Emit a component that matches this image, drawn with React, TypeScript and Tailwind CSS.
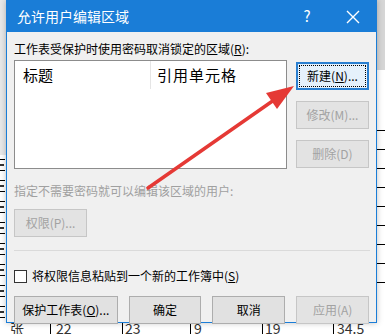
import React from "react";

const font = { fontFamily: '"Noto Sans CJK SC", "Noto Sans", sans-serif' };

function Btn({
  children,
  disabled,
  focused,
  className = "",
}: {
  children: React.ReactNode;
  disabled?: boolean;
  focused?: boolean;
  className?: string;
}) {
  if (focused) {
    return (
      <div className={`border-2 border-[#2a7fd0] bg-[#e5f1fb] p-[1px] ${className}`}>
        <div className="flex h-full items-center justify-center border border-dotted border-black text-[12px] text-black">
          {children}
        </div>
      </div>
    );
  }
  return (
    <div
      className={`flex items-center justify-center border text-[12px] ${
        disabled
          ? "border-[#c6c6c6] bg-[#e3e3e3] text-[#a2a2a2]"
          : "border-[#adadad] bg-[#e1e1e1] text-black"
      } ${className}`}
    >
      {children}
    </div>
  );
}

export default function App() {
  // 背景表格的竖线位置
  const cols = [50, 122, 190, 262, 333];

  return (
    <div className="relative h-[334px] w-[385px] overflow-hidden bg-white" style={font}>
      {/* 背景：Excel 表格碎片 */}
      <div className="absolute left-0 top-0 h-[334px] w-[6px] bg-[#e8e8e8]" />
      <div className="absolute left-0 top-[155px] flex h-[168px] w-[6px] flex-col gap-[9px] bg-white pt-[4px]">
        {Array.from({ length: 8 }).map((_, i) => (
          <div key={i} className="flex h-[12px] flex-col justify-between">
            <div className="h-px w-[5px] bg-black" />
            <div className="h-[2px] w-[4px] bg-[#333]" />
            <div className="h-px w-[5px] bg-black" />
          </div>
        ))}
      </div>
      <div className="absolute right-0 top-0 h-[334px] w-[8px] bg-white">
        <div className="h-[70px] bg-[#d6d6d6]" />
        <div className="mt-[60px] flex flex-col gap-[18px]">
          {Array.from({ length: 9 }).map((_, i) => (
            <div key={i} className="h-px bg-black" />
          ))}
        </div>
      </div>
      <div className="absolute bottom-0 left-0 h-[11px] w-[385px] bg-white text-[14px] leading-[14px] text-[#333]">
        {cols.map((x) => (
          <div key={x} className="absolute top-0 h-[11px] w-px bg-black" style={{ left: x }} />
        ))}
        <span className="absolute left-[10px] top-[-2px]">张</span>
        <span className="absolute left-[56px] top-[-2px]">22</span>
        <span className="absolute left-[125px] top-[-2px]">23</span>
        <span className="absolute left-[194px] top-[-2px]">9</span>
        <span className="absolute left-[265px] top-[-2px]">19</span>
        <span className="absolute left-[337px] top-[-2px]">34.5</span>
      </div>

      {/* 对话框 */}
      <div className="absolute left-[6px] top-0 flex h-[323px] w-[371px] flex-col border border-[#1a7dd7] bg-[#f0f0f0] shadow-[0_0_6px_rgba(0,0,0,0.25)]">
        <div className="flex h-[31px] shrink-0 items-center bg-[#1a7dd7] text-white">
          <span className="ml-[10px] flex-1 text-[14px]">允许用户编辑区域</span>
          <span className="flex w-[46px] justify-center text-[15px]">?</span>
          <span className="flex w-[46px] justify-center">
            <svg width="14" height="14" viewBox="0 0 14 14">
              <path d="M1 1L13 13M13 1L1 13" stroke="white" strokeWidth="1.4" />
            </svg>
          </span>
        </div>

        <div className="flex flex-col px-[7px]">
          <div className="mt-[9px] text-[12px] leading-[16px] text-black">
            工作表受保护时使用密码取消锁定的区域(<span className="underline">R</span>):
          </div>

          <div className="mt-[3px] flex gap-[9px]">
            <div className="h-[109px] w-[273px] border border-[#8c8c8c] bg-white">
              <div className="flex h-[28px] items-center text-[15px] text-black">
                <div className="w-[136px] border-r border-[#e5e5e5] pl-[8px] leading-[28px]">标题</div>
                <div className="pl-[6px] tracking-[1px]">引用单元格</div>
              </div>
            </div>
            <div className="mt-[2px] flex flex-col gap-[11px]">
              <Btn focused className="h-[28px] w-[73px]">
                新建(<span className="underline">N</span>)...
              </Btn>
              <Btn disabled className="h-[28px] w-[73px]">
                修改(M)...
              </Btn>
              <Btn disabled className="h-[28px] w-[73px]">
                删除(D)
              </Btn>
            </div>
          </div>

          <div className="mt-[14px] text-[12px] leading-[16px] text-[#a0a0a0]">
            指定不需要密码就可以编辑该区域的用户:
          </div>
          <Btn disabled className="mt-[10px] h-[28px] w-[73px]">
            权限(P)...
          </Btn>

          <div className="mt-[13px] h-px w-[356px] bg-[#dadada]" />

          <div className="mt-[17px] flex items-center gap-[5px] text-[12px] leading-[16px] text-black">
            <div className="h-[13px] w-[13px] border border-[#333] bg-white" />
            <span>
              将权限信息粘贴到一个新的工作簿中(<span className="underline">S</span>)
            </span>
          </div>

          <div className="mt-[12px] flex gap-[11px]">
            <Btn className="h-[28px] w-[104px]">
              保护工作表(<span className="underline">O</span>)...
            </Btn>
            <Btn className="h-[28px] w-[73px]">确定</Btn>
            <Btn className="h-[28px] w-[73px]">取消</Btn>
            <Btn disabled className="h-[28px] w-[73px]">
              应用(A)
            </Btn>
          </div>
        </div>
      </div>

      {/* 红色箭头标注 */}
      <svg className="pointer-events-none absolute left-0 top-0" width="385" height="334">
        <line x1="148" y1="188" x2="274" y2="100" stroke="#e53935" strokeWidth="3.5" strokeLinecap="round" />
        <polygon points="294,86 277,109 266,93" fill="#e53935" />
      </svg>
    </div>
  );
}
